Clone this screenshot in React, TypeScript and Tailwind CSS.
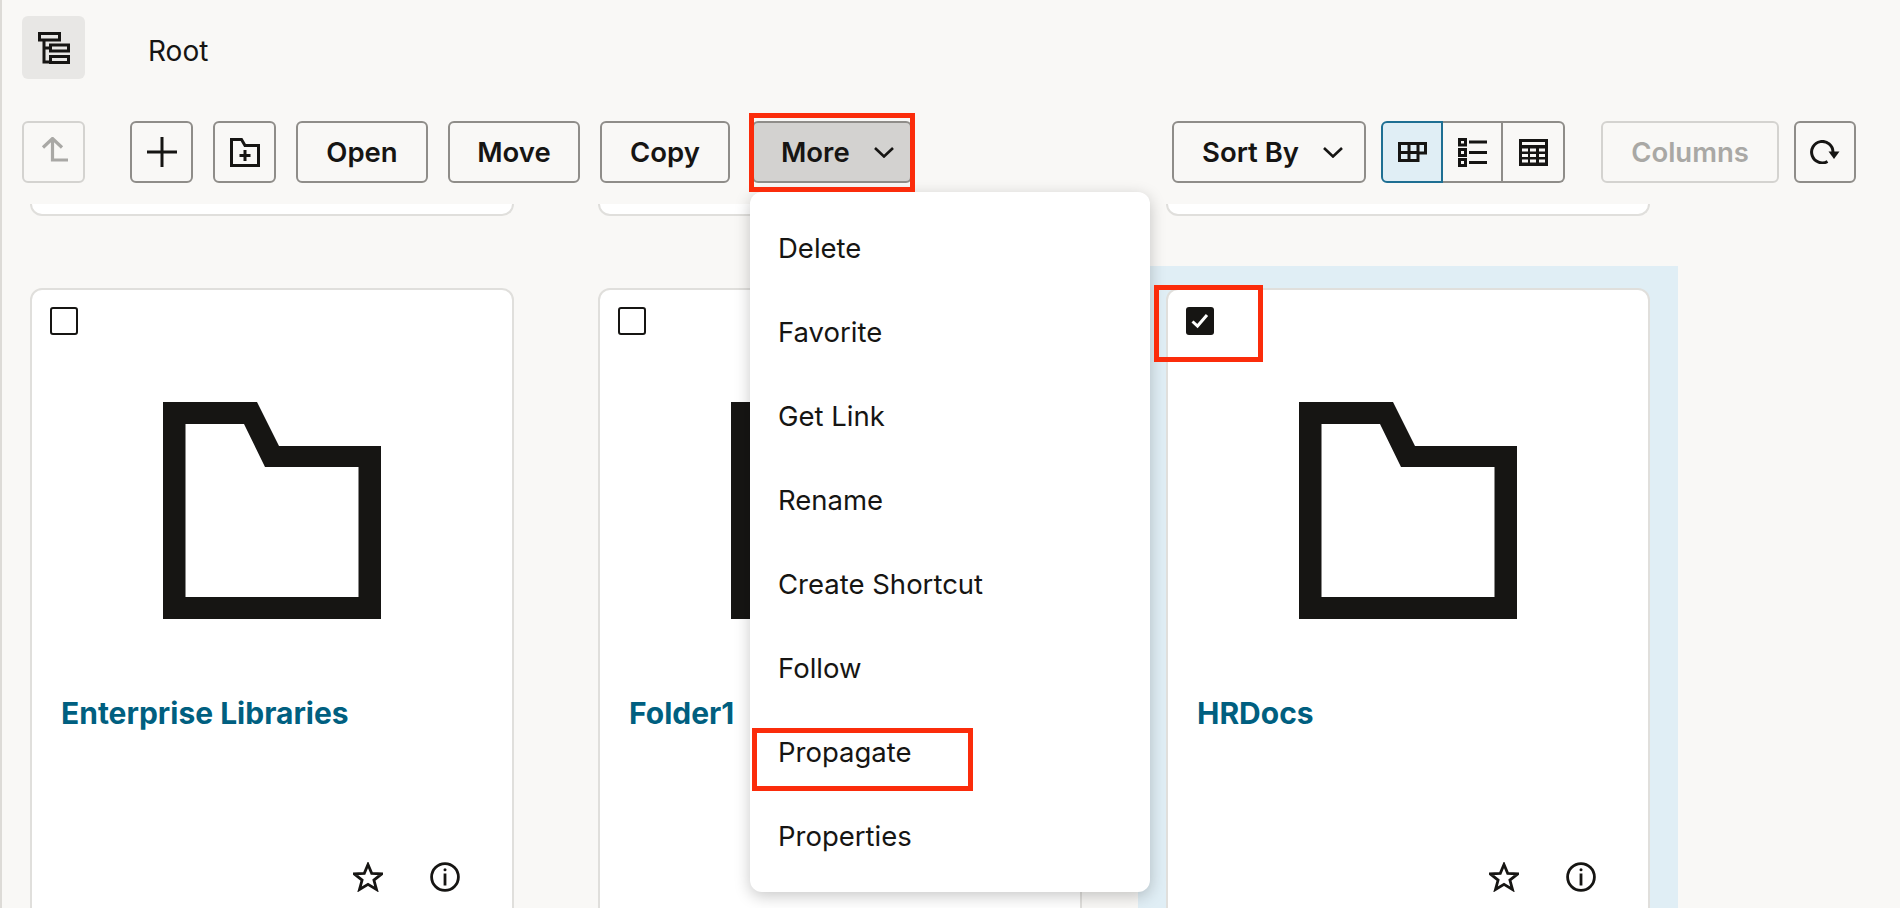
import React from 'react';

const font = "font-['Inter','Liberation_Sans',sans-serif]";

const btn =
  'flex h-[62px] items-center justify-center rounded-md border-2 border-[#8f8d89] text-[27.5px] font-semibold text-[#161513]';

const TreeIcon = () => (
  <svg width="32" height="32" viewBox="0 0 32 32" fill="none" stroke="#161513" strokeWidth="3">
    <rect x="1.500" y="1.500" width="20" height="6.500" />
    <rect x="12.500" y="13" width="18" height="6" />
    <rect x="12.500" y="24.500" width="18" height="6" />
    <path d="M6 8v22h6.500M6 16h6.500" />
  </svg>
);

const UpIcon = () => (
  <svg width="28" height="30" viewBox="0 0 28 30" fill="none" stroke="#a9a8a5" strokeWidth="3.200">
    <path d="M3 10.500 12.500 1.500l9.500 9M12.500 1.500v21.500H28" />
  </svg>
);

const NewFolderIcon = () => (
  <svg width="30" height="29" viewBox="0 0 30 29" fill="none" stroke="#161513" strokeWidth="3">
    <path d="M1.500 1.500H11.500L15 7.500H28.500V27.500H1.500z" />
    <path d="M15 12v11M9.500 17.500h11" />
  </svg>
);

const Chevron = () => (
  <svg width="20" height="11" viewBox="0 0 20 11" fill="none" stroke="#161513" strokeWidth="2.600">
    <path d="M1 1l9 8.500L19 1" />
  </svg>
);

const GridIcon = () => (
  <svg width="29" height="20" viewBox="0 0 29 20" fill="none" stroke="#161513" strokeWidth="3">
    <path d="M1.500 1.500h26v9.500H20v7.500H1.500zM1.500 10.500H20M11 1.500v17M20 1.500v17" />
  </svg>
);

const ListIcon = () => (
  <svg width="29" height="29" viewBox="0 0 29 29" fill="none" stroke="#161513" strokeWidth="3">
    <rect x="1.500" y="1.500" width="6" height="5.500" />
    <rect x="1.500" y="11.500" width="6" height="6" />
    <rect x="1.500" y="21.500" width="6" height="6" />
    <path d="M11 4h18M11 14.500h18M11 24.500h18" />
  </svg>
);

const tableCols = [3, 11, 20];
const tableRows = [9.5, 15, 20.5];

const TableIcon = () => (
  <svg width="29" height="27" viewBox="0 0 29 27">
    <rect width="29" height="27" fill="#161513" />
    <rect x="3" y="3" width="23" height="3" fill="#f9f8f6" />
    {tableRows.map((y) =>
      tableCols.map((x) => <rect key={`${x}-${y}`} x={x} y={y} width="6" height="3" fill="#f9f8f6" />),
    )}
  </svg>
);

const RefreshIcon = () => (
  <svg width="30" height="24" viewBox="0 0 30 24" fill="none" stroke="#161513" strokeWidth="3">
    <path d="M23 12A10.700 10.700 0 1 0 17.500 21.500" />
    <path d="M18.500 11.500h11l-5.500 7.500z" fill="#161513" stroke="none" />
  </svg>
);

const FolderIcon = () => (
  <svg width="218" height="217" viewBox="0 0 218 217">
    <path
      fillRule="evenodd"
      fill="#161513"
      d="M0 0h94l22 44h102v173H0zM22.500 22v173h173V65H102L81 22z"
    />
  </svg>
);

const StarIcon = () => (
  <svg width="30" height="30" viewBox="0 0 30 30" fill="none" stroke="#161513" strokeWidth="2.800">
    <path d="M15 2.500l3.700 8.800 10 .6-7.800 6.200 2.600 9.400L15 22.400l-8.500 5.100 2.600-9.400-7.800-6.200 10-.6z" />
  </svg>
);

const InfoIcon = () => (
  <svg width="30" height="30" viewBox="0 0 30 30" fill="none" stroke="#161513" strokeWidth="2.800">
    <circle cx="15" cy="15" r="13.400" />
    <path d="M15 11.500V23.500" />
    <circle cx="15" cy="7.800" r="1.500" fill="#161513" stroke="none" />
  </svg>
);

const Card = ({ title, checked }: { title: string; checked?: boolean }) => (
  <div className={`px-[28px] pt-[22px] ${checked ? 'bg-[#e0eef5]' : ''}`}>
    <div className="h-[800px] rounded-xl border-2 border-[#e0dfdc] bg-white pl-[18px] pt-[17px]">
      {checked ? (
        <div className="flex h-[28px] w-[28px] items-center justify-center rounded-[3px] bg-[#161513]">
          <svg width="18" height="16" viewBox="0 0 18 16" fill="none" stroke="#fff" strokeWidth="3">
            <path d="M1.500 8.500 6.500 13 16 2" />
          </svg>
        </div>
      ) : (
        <div className="h-[28px] w-[28px] rounded-[3px] border-2 border-[#161513] bg-white" />
      )}
      <div className="mt-[67px] flex justify-center pr-[18px]">
        <FolderIcon />
      </div>
      <div className="mt-[78px] pl-[11px] text-[30px] font-bold leading-[32px] text-[#005f80]">{title}</div>
      <div className="mt-[133px] flex items-center justify-end gap-[47px] pr-[52px]">
        <StarIcon />
        <InfoIcon />
      </div>
    </div>
  </div>
);

const menuItems = ['Delete', 'Favorite', 'Get Link', 'Rename', 'Create Shortcut', 'Follow', 'Propagate', 'Properties'];

const columns = [0, 1, 2];

export default function App() {
  return (
    <div className={`relative flex h-[908px] w-[1900px] flex-col overflow-hidden border-l-2 border-[#dddbd7] bg-[#f9f8f6] ${font} text-[#161513]`}>
      {/* Breadcrumb */}
      <div className="flex items-center pl-5 pt-4">
        <div className="flex h-[63px] w-[63px] items-center justify-center rounded-md bg-[#e8e7e5]">
          <TreeIcon />
        </div>
        <span className="ml-[63px] mt-[7px] text-[28px]">Root</span>
      </div>

      {/* Toolbar */}
      <div className="mt-[42px] flex items-center pl-5">
        <div className="flex h-[62px] w-[63px] items-center justify-center rounded-md border-2 border-[#d4d3d0]">
          <UpIcon />
        </div>
        <div className={`${btn} ml-[45px] w-[63px]`}>
          <svg width="30" height="30" viewBox="0 0 30 30" stroke="#161513" strokeWidth="3">
            <path d="M15 0v30M0 15h30" />
          </svg>
        </div>
        <div className={`${btn} ml-5 w-[63px]`}>
          <NewFolderIcon />
        </div>
        <div className={`${btn} ml-5 w-[132px] pt-0.5`}>Open</div>
        <div className={`${btn} ml-5 w-[132px] pt-0.5`}>Move</div>
        <div className={`${btn} ml-5 w-[130px] pt-0.5`}>Copy</div>
        <div className={`${btn} ml-[22px] w-[160px] !justify-start gap-[24px] bg-[#d3d2d0] pl-[27px]`}>
          <span className="pt-0.5">More</span> <Chevron />
        </div>
        <div className={`${btn} ml-[260px] w-[194px] !justify-start gap-[24px] pl-[28px]`}>
          <span className="pt-0.5">Sort By</span> <Chevron />
        </div>
        <div className="ml-[15px] flex h-[62px] w-[184px]">
          <div className="flex w-[62px] items-center justify-center rounded-l-md border-2 border-[#1e6f93] bg-[#e0eef5]">
            <GridIcon />
          </div>
          <div className="flex w-[60px] items-center justify-center border-y-2 border-r-2 border-[#8f8d89]">
            <ListIcon />
          </div>
          <div className="flex flex-1 items-center justify-center rounded-r-md border-y-2 border-r-2 border-[#8f8d89]">
            <TableIcon />
          </div>
        </div>
        <div className="ml-9 flex h-[62px] w-[178px] items-center justify-center rounded-md border-2 border-[#d4d3d0] pt-0.5 text-[27.5px] font-semibold text-[#a9a8a5]">
          Columns
        </div>
        <div className={`${btn} ml-[15px] w-[62px]`}>
          <RefreshIcon />
        </div>
      </div>

      {/* Cards, scrolled so only the foot of the row above shows */}
      <div className="mt-[21px] min-h-0 flex-1 overflow-hidden">
        <div className="grid grid-cols-[540px_540px_540px] gap-x-7">
          {columns.map((c) => (
            <div key={c} className="px-[28px]">
              <div className="h-[12px] rounded-b-xl border-x-2 border-b-2 border-[#e0dfdc] bg-white" />
            </div>
          ))}
        </div>
        <div className="mt-[50px] grid grid-cols-[540px_540px_540px] gap-x-7">
          <Card title="Enterprise Libraries" />
          <Card title="Folder1" />
          <Card title="HRDocs" checked />
        </div>
      </div>

      {/* More dropdown */}
      <div className="absolute left-[748px] top-[192px] w-[400px] rounded-xl bg-white pt-[15px] text-[27.5px] shadow-[0_4px_16px_rgba(0,0,0,0.22)]">
        {menuItems.map((item) => (
          <div key={item} className="flex h-[84px] items-center pl-7">
            {item}
          </div>
        ))}
        <div className="h-[13px]" />
      </div>

      {/* Red annotation boxes */}
      <div className="absolute left-[747px] top-[113px] h-[79px] w-[166px] border-[5px] border-[#fb2c0b]" />
      <div className="absolute left-[750px] top-[728px] h-[63px] w-[221px] border-[5px] border-[#fb2c0b]" />
      <div className="absolute left-[1152px] top-[285px] h-[77px] w-[109px] border-[5px] border-[#fb2c0b]" />
    </div>
  );
}
